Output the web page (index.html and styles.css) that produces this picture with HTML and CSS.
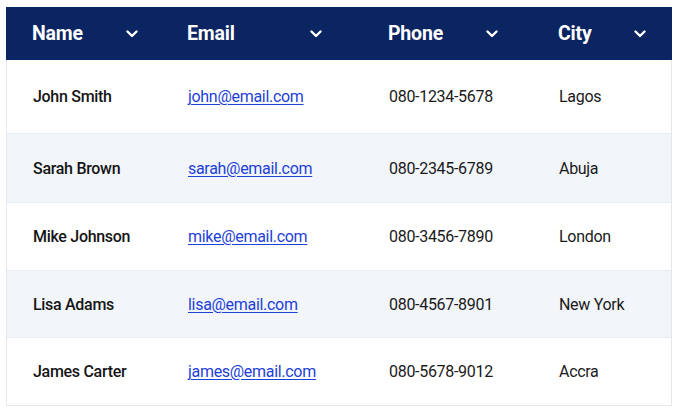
FILE: index.html
```html
<!DOCTYPE html>
<html>
<head>
<meta charset="utf-8">
<link rel="stylesheet" href="styles.css">
</head>
<body>
<div class="table">
  <div class="row head">
    <div class="cell c1"><span>Name</span><svg class="chev" viewBox="0 0 12 8"><path d="M1.5 1.5 L6 6 L10.5 1.5"/></svg></div>
    <div class="cell c2"><span>Email</span><svg class="chev" viewBox="0 0 12 8"><path d="M1.5 1.5 L6 6 L10.5 1.5"/></svg></div>
    <div class="cell c3"><span>Phone</span><svg class="chev" viewBox="0 0 12 8"><path d="M1.5 1.5 L6 6 L10.5 1.5"/></svg></div>
    <div class="cell c4"><span>City</span><svg class="chev" viewBox="0 0 12 8"><path d="M1.5 1.5 L6 6 L10.5 1.5"/></svg></div>
  </div>
  <div class="row r1">
    <div class="cell c1 name">John Smith</div>
    <div class="cell c2"><a href="#">john@email.com</a></div>
    <div class="cell c3">080-1234-5678</div>
    <div class="cell c4">Lagos</div>
  </div>
  <div class="row r2 alt">
    <div class="cell c1 name">Sarah Brown</div>
    <div class="cell c2"><a href="#">sarah@email.com</a></div>
    <div class="cell c3">080-2345-6789</div>
    <div class="cell c4">Abuja</div>
  </div>
  <div class="row r3">
    <div class="cell c1 name">Mike Johnson</div>
    <div class="cell c2"><a href="#">mike@email.com</a></div>
    <div class="cell c3">080-3456-7890</div>
    <div class="cell c4">London</div>
  </div>
  <div class="row r4 alt">
    <div class="cell c1 name">Lisa Adams</div>
    <div class="cell c2"><a href="#">lisa@email.com</a></div>
    <div class="cell c3">080-4567-8901</div>
    <div class="cell c4">New York</div>
  </div>
  <div class="row r5">
    <div class="cell c1 name">James Carter</div>
    <div class="cell c2"><a href="#">james@email.com</a></div>
    <div class="cell c3">080-5678-9012</div>
    <div class="cell c4">Accra</div>
  </div>
</div>
</body>
</html>
```
FILE: styles.css
```css
html, body {
  margin: 0;
  padding: 0;
  background: #ffffff;
}
body {
  padding: 7px 7px 0 6px;
  font-family: Roboto, "Liberation Sans", sans-serif;
  color: #1a1a1a;
}
.table {
  width: 666px;
  border: 1px solid #e4e7ec;
  border-top: none;
  box-sizing: border-box;
}
.row {
  display: grid;
  grid-template-columns: 155px 201px 170px 1fr;
  align-items: center;
  border-bottom: 1px solid #e9edf3;
}
.row:last-child {
  border-bottom: none;
}
.head {
  background: #0b2462;
  height: 53px;
  margin: 0 -1px;
  border-bottom: none;
  color: #ffffff;
  font-weight: 700;
  font-size: 19.5px;
  letter-spacing: -0.2px;
}
.head .cell {
  display: flex;
  align-items: center;
  justify-content: space-between;
}
.chev {
  width: 12px;
  height: 8px;
  fill: none;
  stroke: #ffffff;
  stroke-width: 2.4;
  stroke-linecap: round;
  stroke-linejoin: round;
}
.cell {
  padding-left: 26px;
  font-size: 16px;
  letter-spacing: -0.3px;
}
.head .cell { letter-spacing: -0.2px; font-size: 19.5px; }
.head .c1 { padding-right: 23px; }
.head .c2 { padding-right: 40px; }
.head .c3 { padding-right: 34px; }
.head .c4 { padding-right: 26px; }
.r1 { height: 73px; }
.r2 { height: 68px; }
.r3 { height: 67px; }
.r4 { height: 66px; }
.r5 { height: 67px; }
.alt { background: #f2f5fa; }
.name { font-weight: 500; color: #151515; }
a {
  color: #1d41d8;
  text-decoration: underline;
  text-underline-offset: 2px;
  text-decoration-thickness: 1px;
}
```
